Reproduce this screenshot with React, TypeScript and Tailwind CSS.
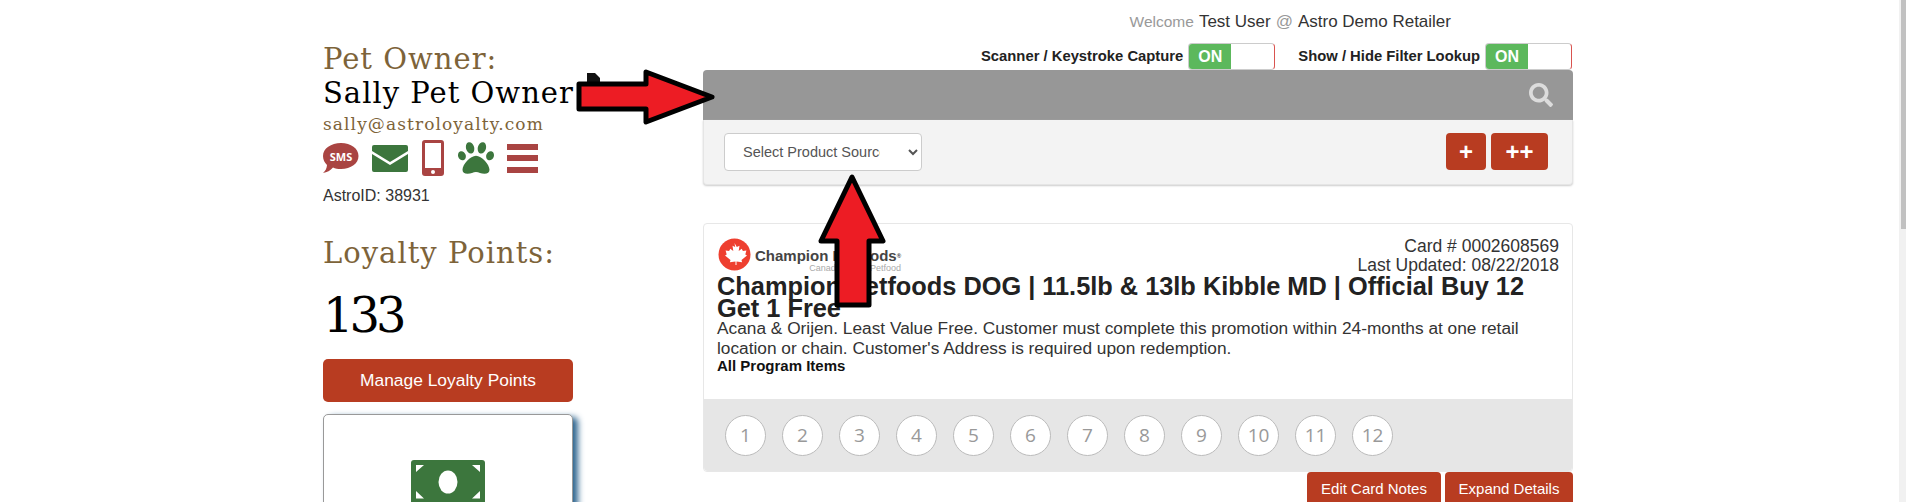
import React from "react";
import { FaPaw, FaSearch } from "react-icons/fa";

const slab = { fontFamily: '"DejaVu Serif", serif' };
const open = { fontFamily: '"Open Sans", sans-serif' };

function Toggle() {
  return (
    <div className="flex h-[27px] w-[87px] overflow-hidden rounded-[4px] border border-[#ccc] border-r-[#d9534f] bg-white">
      <div className="flex w-[42px] items-center justify-center bg-[#5cb85c] text-[16px] text-white">ON</div>
    </div>
  );
}

function Sms() {
  return (
    <svg width="36" height="32" viewBox="0 0 36 32">
      <path d="M18 1c10 0 17.500 5.500 17.500 13S28 27 18 27c-3 0-6-.5-8-1.500C7.500 28.500 4 30.500 0 31c2.500-2 3.800-5 4-8-2.500-2.300-4-5.500-4-9C0 6.500 8 1 18 1z" fill="#a94442" />
      <text x="18" y="19" textAnchor="middle" fontSize="11" fontWeight="700" fill="#fff" fontFamily="Open Sans, sans-serif">SMS</text>
    </svg>
  );
}

function Mail() {
  return (
    <svg width="36" height="27" viewBox="0 0 36 27">
      <path d="M2 0h32a2 2 0 0 1 2 2v4L18 17 0 6V2a2 2 0 0 1 2-2z" fill="#3c763d" />
      <path d="M0 9l18 11L36 9v16a2 2 0 0 1-2 2H2a2 2 0 0 1-2-2z" fill="#3c763d" />
    </svg>
  );
}

function Phone() {
  return (
    <svg width="22" height="36" viewBox="0 0 22 36">
      <path fillRule="evenodd" d="M3 0h16a3 3 0 0 1 3 3v30a3 3 0 0 1-3 3H3a3 3 0 0 1-3-3V3a3 3 0 0 1 3-3zM3 3v25h16V3z" fill="#a94442" />
      <circle cx="11" cy="32" r="2" fill="#fff" />
    </svg>
  );
}

function Bars() {
  return (
    <div className="flex h-[29px] w-[31px] flex-col justify-between">
      <div className="h-[6px] bg-[#a94442]" />
      <div className="h-[6px] bg-[#a94442]" />
      <div className="h-[6px] bg-[#a94442]" />
    </div>
  );
}

function Money() {
  return (
    <svg width="74" height="44" viewBox="0 0 74 44" className="block">
      <rect width="74" height="44" rx="3" fill="#3c763d" />
      <ellipse cx="37" cy="22" rx="9.500" ry="11.500" fill="#fff" />
      <path d="M5 5h8l-8 7zM69 5h-8l8 7zM5 31l8 7.500H5zM69 31l-8 7.500h8z" fill="#fff" />
    </svg>
  );
}

function Logo() {
  return (
    <div className="flex h-[33px] items-center pt-[1px]">
      <svg width="33" height="33" viewBox="0 0 33 33" className="ml-[1px]">
        <circle cx="16.500" cy="16.500" r="16" fill="#ee3f2f" />
        <path d="M16.500 5l2.300 4 2.700-1.200-.8 5.200 3-2.200 1.200 2.300 3.500-.6-1.100 3.900 1.700 1.100-5.500 4.500.6 2.200-5.600-.6V27h-1v-3.400l-5.600.6.600-2.200-5.500-4.500 1.700-1.100-1.100-3.900 3.500.6 1.200-2.300 3 2.200-.8-5.200 2.700 1.200z" fill="#fff" />
      </svg>
      <div className="ml-[4px] flex flex-col items-end pt-[12px] leading-none">
        <span className="text-[15px] font-bold leading-[17px] text-[#444]">Champion Petfoods<sup className="text-[6px]">®</sup></span>
        <span className="text-[9px] leading-[9px] text-[#aaa]">Canada's Best Petfood</span>
      </div>
    </div>
  );
}

function RightArrow() {
  return (
    <svg className="absolute left-[575px] top-[68px]" width="142" height="58" viewBox="0 0 142 58">
      <path d="M4 16H71V4L137 29L71 54V41H4z" fill="#ed1c24" stroke="#000" strokeWidth="5" strokeLinejoin="round" />
    </svg>
  );
}

function UpArrow() {
  return (
    <svg className="absolute left-[817px] top-[174px]" width="70" height="135" viewBox="0 0 70 135">
      <path d="M35 3L66 67H52V131H20V67H4z" fill="#ed1c24" stroke="#000" strokeWidth="5" strokeLinejoin="round" />
    </svg>
  );
}

export default function App() {
  const steps = [1, 2, 3, 4, 5, 6, 7, 8, 9, 10, 11, 12];
  return (
    <div className="relative flex h-[502px] w-[1906px] overflow-hidden bg-white text-[#333]" style={{ fontFamily: '"Liberation Sans", Arial, sans-serif' }}>
      <div className="flex h-full flex-1 gap-[130px] pl-[323px]">
        <aside className="w-[250px] shrink-0 pt-[42px]">
          <div className="whitespace-nowrap text-[29px] leading-[34px] tracking-[1px] text-[#7d6339]" style={slab}>Pet Owner:</div>
          <div className="whitespace-nowrap text-[29px] leading-[34px] tracking-[1px] text-black" style={slab}>Sally Pet Owner</div>
          <div className="mt-[3px] whitespace-nowrap text-[17px] leading-[22px] tracking-[1.100px] text-[#7d6339]" style={slab}>sally@astroloyalty.com</div>
          <div className="mt-[5px] flex h-[36px] items-center">
            <Sms />
            <div className="ml-[13px]"><Mail /></div>
            <div className="ml-[14px]"><Phone /></div>
            <FaPaw className="ml-[14px] text-[#3c763d]" size={36} />
            <div className="ml-[13px]"><Bars /></div>
          </div>
          <div className="mt-[10px] text-[16px] leading-[20px]">AstroID: 38931</div>
          <div className="mt-[30px] whitespace-nowrap text-[29px] leading-[34px] tracking-[1px] text-[#7d6339]" style={slab}>Loyalty Points:</div>
          <div className="mt-[16px] text-[48px] leading-[58px] tracking-[-4px] text-black" style={slab}>133</div>
          <button className="mt-[15px] flex h-[43px] w-[250px] items-center justify-center rounded-[5px] bg-[#b83c21] text-[17.400px] text-white">Manage Loyalty Points</button>
          <div className="mt-[12px] flex h-[120px] w-[250px] justify-center rounded-[5px] border border-[#999] bg-white pt-[45px] shadow-[5px_3px_6px_#2f6690]">
            <Money />
          </div>
        </aside>

        <main className="w-[870px] shrink-0">
          <div className="flex h-[43px] items-center justify-end pt-[1px] text-[17px] leading-[24px] whitespace-nowrap">
            <span className="mr-[5px] text-[15.500px] text-[#999]">Welcome</span>
            <span>Test User</span>
            <span className="mx-[5px] text-[#999]">@</span>
            <span className="mr-[122px]">Astro Demo Retailer</span>
          </div>
          <div className="flex h-[27px] items-center justify-end pr-[1px] text-[14.800px] font-bold text-[#222]">
            <span className="mr-[5px]">Scanner / Keystroke Capture</span>
            <Toggle />
            <span className="ml-[23px] mr-[5px]">Show / Hide Filter Lookup</span>
            <Toggle />
          </div>
          <div className="flex h-[50px] items-center justify-end rounded-t-[4px] bg-[#979797] pr-[20px]">
            <FaSearch className="text-[#dcdcdc]" size={24} />
          </div>
          <div className="flex h-[65px] items-start justify-between rounded-b-[4px] border border-t-0 border-[#e5e5e5] bg-[#f3f3f3] pl-[20px] pr-[24px] pt-[13px] shadow-[0_1px_2px_#ccc]">
            <select className="h-[38px] w-[198px] rounded-[4px] border border-[#ccc] bg-white pl-[14px] pr-[25px] text-[14.500px] text-[#555]">
              <option>Select Product Source</option>
            </select>
            <div className="flex gap-[5px]">
              <button className="h-[37px] w-[40px] rounded-[4px] bg-[#b83c21] text-[24px] font-bold leading-none text-white">+</button>
              <button className="h-[37px] w-[57px] rounded-[4px] bg-[#b83c21] text-[24px] font-bold leading-none text-white">++</button>
            </div>
          </div>

          <div className="mt-[38px] rounded-[4px] border border-[#e7e7e7] bg-white">
            <div className="h-[175px] px-[13px] pt-[13px]">
              <div className="flex justify-between">
                <Logo />
                <div className="text-right text-[17.500px] leading-[19px]">
                  <div>Card # 0002608569</div>
                  <div>Last Updated: 08/22/2018</div>
                </div>
              </div>
              <div className="text-[25.350px] font-bold leading-[22px] text-[#222]">Champion Petfoods DOG | 11.5lb &amp; 13lb Kibble MD | Official Buy 12 Get 1 Free</div>
              <div className="mt-[-1px] text-[17.300px] leading-[20px]">Acana &amp; Orijen. Least Value Free. Customer must complete this promotion within 24-months at one retail location or chain. Customer's Address is required upon redemption.</div>
              <div className="text-[15px] font-bold leading-[16px] text-[#111]">All Program Items</div>
            </div>
            <div className="flex h-[72px] items-center gap-[16px] rounded-b-[4px] bg-[#e6e6e6] pl-[21px]">
              {steps.map((n) => (
                <div key={n} className="flex h-[41px] w-[41px] items-center justify-center rounded-full border border-[#bbb] bg-white text-[19px] text-[#999]" style={open}>{n}</div>
              ))}
            </div>
          </div>
          <div className="flex justify-end gap-[4px]">
            <button className="h-[40px] w-[134px] rounded-t-[4px] bg-[#b83c21] pb-[6px] text-[15px] text-white">Edit Card Notes</button>
            <button className="h-[40px] w-[128px] rounded-t-[4px] bg-[#b83c21] pb-[6px] text-[15px] text-white">Expand Details</button>
          </div>
        </main>
      </div>
      <div className="h-full w-[7px] shrink-0 bg-[#f1f1f1] pl-[2px]">
        <div className="h-[229px] bg-[#c1c1c1]" />
      </div>

      <svg className="absolute left-[587px] top-[73px]" width="13" height="11" viewBox="0 0 13 11">
        <path d="M0 0h8l5 5v6H0z" fill="#111" />
      </svg>
      <RightArrow />
      <UpArrow />
    </div>
  );
}
